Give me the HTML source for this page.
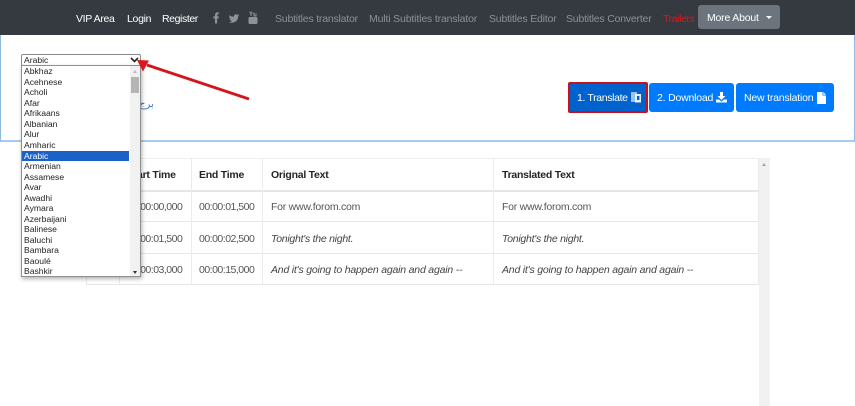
<!DOCTYPE html>
<html><head><meta charset="utf-8">
<style>
html,body{margin:0;padding:0;width:855px;height:406px;overflow:hidden;background:#fff;}
body{font-family:"Liberation Sans",sans-serif;position:relative;}
#w{position:absolute;left:0;top:0;width:855px;height:406px;filter:blur(.35px);}
.a{position:absolute;white-space:nowrap;}
.box{position:absolute;}
.nav{font-size:10.5px;line-height:14px;top:12px;letter-spacing:-.2px;}
.th{font-size:10.5px;font-weight:bold;color:#212529;line-height:14px;top:168px;letter-spacing:-.25px;}
.td{font-size:10.5px;color:#555;line-height:14px;letter-spacing:-.25px;}
.n{letter-spacing:-.5px;}
.i{font-style:italic;color:#444;letter-spacing:-.2px;}
.h{position:absolute;height:1px;background:#e4e6e8;}
.v{position:absolute;width:1px;background:#e9ebed;}
.btn{position:absolute;top:83px;height:29px;background:#007bff;border-radius:3px;color:#fff;font-size:10.5px;line-height:29px;letter-spacing:-.2px;}
.btn span{top:1px;}
.o{position:absolute;left:24px;font-size:8.6px;line-height:10.5px;color:#222;font-family:"Liberation Sans",sans-serif;white-space:nowrap;}
</style></head><body>
<div id="w">
<div class="box" style="left:0;top:0;width:855px;height:35px;background:#343a40;"></div>
<span class="a nav" style="left:76px;color:#fff;letter-spacing:-.35px;">VIP Area</span>
<span class="a nav" style="left:127px;color:#fff;letter-spacing:-.3px;">Login</span>
<span class="a nav" style="left:162px;color:#fff;letter-spacing:-.4px;">Register</span>
<svg class="a" style="left:211px;top:11px" width="50" height="14" viewBox="0 0 50 14">
<path d="M4 12.5V7.5H2.4V5.4H4V4C4 2.3 5 1.4 6.5 1.4H7.8V3.4H7C6.3 3.4 6.1 3.7 6.1 4.3V5.4H7.8L7.5 7.5H6.1V12.5Z" fill="#8e9296"/>
<path d="M18 4.2C19.8 5.2 21.5 5.6 23 5.6C22.7 3.6 25 2.4 26.5 3.8C27 3.7 27.6 3.5 28 3.2C27.8 3.8 27.4 4.2 27 4.5C27.5 4.4 27.9 4.3 28.3 4.1C28 4.6 27.6 5 27.2 5.3C27.3 8.8 24.5 11.8 20.8 11.8C19.6 11.8 18.6 11.5 17.7 11C19 11.1 20 10.8 21 10C20 10 19.2 9.4 18.9 8.5C19.3 8.6 19.6 8.6 20 8.5C19 8.2 18.2 7.3 18.3 6.2C18.6 6.4 19 6.5 19.3 6.5C18.4 5.9 17.9 5.2 18 4.2Z" fill="#8e9296"/>
<rect x="37.5" y="6" width="9" height="7" rx="1.5" fill="#8e9296"/>
<path d="M38.5 .5L40 3V5M41 .5L40 3M41.6 2.2H43V5M43.2 2.2V5H45V2.2" stroke="#8e9296" stroke-width="1" fill="none"/>
</svg>
<span class="a nav" style="left:275px;color:#8c9196;">Subtitles translator</span>
<span class="a nav" style="left:369px;color:#8c9196;letter-spacing:-.15px;">Multi Subtitles translator</span>
<span class="a nav" style="left:489px;color:#8c9196;">Subtitles Editor</span>
<span class="a nav" style="left:566px;color:#8c9196;">Subtitles Converter</span>
<span class="a nav" style="left:663px;color:#d9161c;letter-spacing:-.4px;">Trailers</span>
<div class="box" style="left:698px;top:5px;width:82px;height:24px;background:#6c757d;border-radius:3px;"></div>
<span class="a nav" style="left:707px;top:11px;color:#fff;">More About</span>
<div class="box" style="left:766px;top:16px;border-left:3px solid transparent;border-right:3px solid transparent;border-top:3px solid #fff;"></div>

<div class="box" style="left:0;top:35px;height:105px;border-left:1px solid #8db9e4;border-right:1px solid #8db9e4;border-bottom:2px solid #a6cbef;box-sizing:content-box;width:853px;"></div>
<span class="a" style="left:139px;top:99px;font-size:10px;color:#3f77c2;font-family:'Liberation Sans','Noto Sans CJK SC',sans-serif;">برج</span>

<div class="btn" style="left:568px;top:82px;width:80px;height:31px;background:#c8101e;border-radius:2px;"></div>
<div class="btn" style="left:570px;top:84px;width:76px;height:27px;background:#0062cc;border-radius:1px;line-height:27px;"><span class="a" style="left:7px;letter-spacing:-.35px;">1. Translate</span>
<svg class="a" style="left:60.5px;top:8px" width="10" height="11" viewBox="0 0 10 11"><rect x="0" y="0" width="6" height="10" fill="#9cc3ee"/><rect x="4" y="2" width="6" height="8.5" fill="#e8f1fb"/><rect x="6" y="4" width="2.4" height="4" fill="#0062cc"/></svg></div>
<div class="btn" style="left:649px;width:85px;"><span class="a" style="left:8px;">2. Download</span>
<svg class="a" style="left:67px;top:9px" width="11" height="11" viewBox="0 0 11 11"><path d="M4 0H7V4H9.5L5.5 8L1.5 4H4Z M0 7.5H3L5.5 9.5L8 7.5H11V10.5H0Z" fill="#fff"/></svg></div>
<div class="btn" style="left:736px;width:98px;"><span class="a" style="left:8px;">New translation</span>
<svg class="a" style="left:81px;top:9px" width="9" height="12" viewBox="0 0 9 12"><path d="M0 0H5.5V3.5H9V12H0Z M6.2 0L9 2.8H6.2Z" fill="#fff"/></svg></div>

<!-- table -->
<div class="h" style="left:86px;top:158px;width:672px;background:#eceef0"></div>
<div class="h" style="left:86px;top:190px;width:672px;height:2px;background:#e4e6e8"></div>
<div class="h" style="left:86px;top:221px;width:672px;"></div>
<div class="h" style="left:86px;top:253px;width:672px;"></div>
<div class="h" style="left:86px;top:284px;width:672px;"></div>
<div class="v" style="left:86px;top:158px;height:127px"></div>
<div class="v" style="left:119px;top:158px;height:127px"></div>
<div class="v" style="left:191px;top:158px;height:127px"></div>
<div class="v" style="left:262px;top:158px;height:127px"></div>
<div class="v" style="left:493px;top:158px;height:127px"></div>
<div class="v" style="left:758px;top:158px;height:127px"></div>
<div class="box" style="left:759px;top:158px;width:11px;height:248px;background:#f1f1f1;"></div>
<div class="box" style="left:762px;top:163px;border-left:2.5px solid transparent;border-right:2.5px solid transparent;border-bottom:3px solid #a3a3a3;"></div>

<span class="a th" style="left:127px;">Start Time</span>
<span class="a th" style="left:199px;">End Time</span>
<span class="a th" style="left:271px;">Orignal Text</span>
<span class="a th" style="left:502px;">Translated Text</span>

<span class="a td n" style="left:127px;top:200px;">00:00:00,000</span>
<span class="a td n" style="left:199px;top:200px;">00:00:01,500</span>
<span class="a td" style="left:271px;top:200px;">For www.forom.com</span>
<span class="a td" style="left:502px;top:200px;">For www.forom.com</span>
<span class="a td n" style="left:127px;top:232px;">00:00:01,500</span>
<span class="a td n" style="left:199px;top:232px;">00:00:02,500</span>
<span class="a td i" style="left:271px;top:232px;letter-spacing:-.26px;">Tonight's the night.</span>
<span class="a td i" style="left:502px;top:232px;letter-spacing:-.26px;">Tonight's the night.</span>
<span class="a td n" style="left:127px;top:263px;">00:00:03,000</span>
<span class="a td n" style="left:199px;top:263px;">00:00:15,000</span>
<span class="a td i" style="left:271px;top:263px;">And it's going to happen again and again --</span>
<span class="a td i" style="left:502px;top:263px;">And it's going to happen again and again --</span>

<!-- select -->
<div class="box" style="left:21px;top:54px;width:120px;height:12px;background:#fff;border:1px solid #8a8a8a;box-sizing:border-box;border-radius:2px;"></div>
<span class="o" style="left:24px;top:55px;">Arabic</span>
<svg class="a" style="left:130px;top:57px" width="9" height="6" viewBox="0 0 9 6"><path d="M1 1L4.5 4.5L8 1" stroke="#222" stroke-width="1.6" fill="none"/></svg>
<!-- list -->
<div class="box" style="left:21px;top:65px;width:120px;height:212px;background:#fff;border:1px solid #8f8f8f;box-sizing:border-box;box-shadow:1px 2px 4px rgba(0,0,0,.3);"></div>
<div class="box" style="left:130px;top:66px;width:10px;height:210px;background:#f1f1f1;"></div>
<div class="box" style="left:131px;top:77px;width:8px;height:16px;background:#b5b5b5;"></div>
<div class="box" style="left:132.5px;top:70px;border-left:2.5px solid transparent;border-right:2.5px solid transparent;border-bottom:3px solid #bbb;"></div>
<div class="box" style="left:132.5px;top:271px;border-left:2.5px solid transparent;border-right:2.5px solid transparent;border-top:3px solid #333;"></div>
<div class="box" style="left:22px;top:151px;width:107px;height:10px;background:#1a62c8;"></div>
<span class="o" style="top:66px">Abkhaz</span>
<span class="o" style="top:77px">Acehnese</span>
<span class="o" style="top:87px">Acholi</span>
<span class="o" style="top:98px">Afar</span>
<span class="o" style="top:108px">Afrikaans</span>
<span class="o" style="top:119px">Albanian</span>
<span class="o" style="top:129px">Alur</span>
<span class="o" style="top:140px">Amharic</span>
<span class="o" style="top:151px;color:#fff">Arabic</span>
<span class="o" style="top:161px">Armenian</span>
<span class="o" style="top:172px">Assamese</span>
<span class="o" style="top:182px">Avar</span>
<span class="o" style="top:193px">Awadhi</span>
<span class="o" style="top:203px">Aymara</span>
<span class="o" style="top:214px">Azerbaijani</span>
<span class="o" style="top:224px">Balinese</span>
<span class="o" style="top:235px">Baluchi</span>
<span class="o" style="top:245px">Bambara</span>
<span class="o" style="top:256px">Baoulé</span>
<span class="o" style="top:266px">Bashkir</span>

<!-- arrow -->
<svg class="a" style="left:130px;top:52px" width="125" height="55" viewBox="0 0 125 55">
<path d="M119 47L17 13" stroke="#d3151c" stroke-width="2.8" fill="none"/>
<path d="M7 8L19 8.5L13 19.5Z" fill="#e0141b"/>
</svg>
</div>
</body></html>
